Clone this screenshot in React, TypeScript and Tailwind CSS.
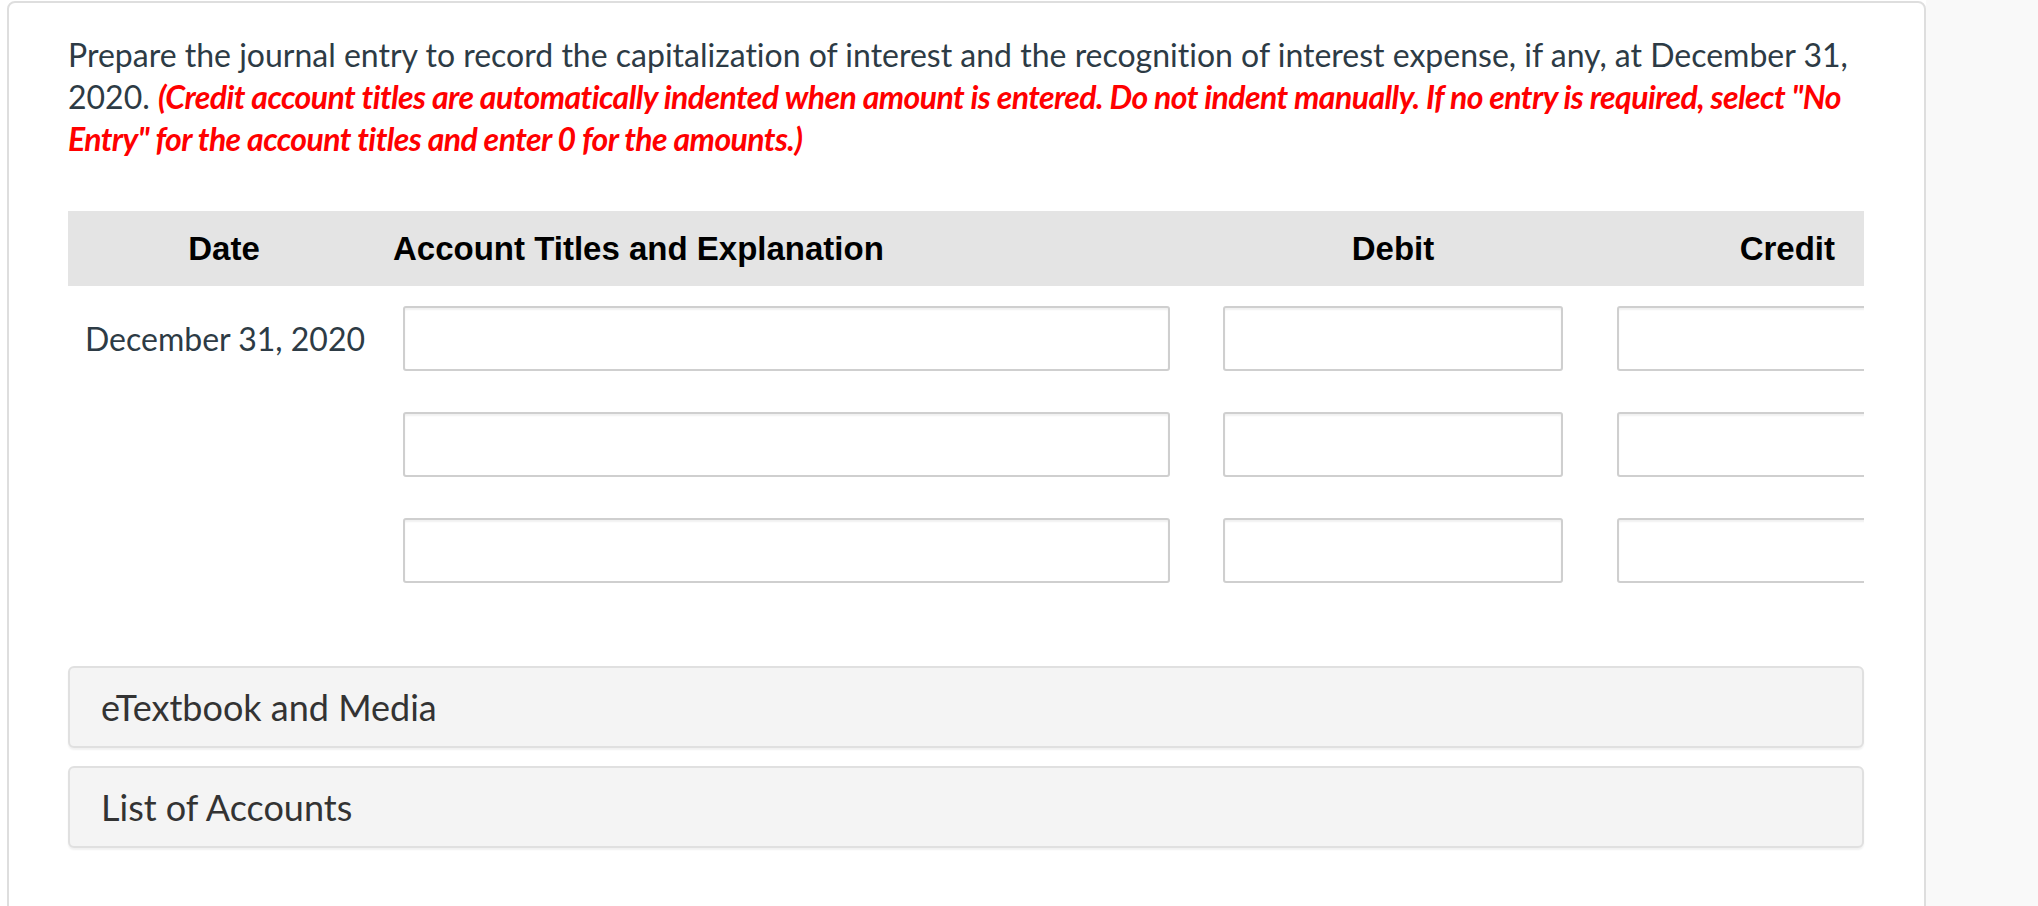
import React from 'react';

const rows = [0, 1, 2];

function EntryInput({ className = '' }: { className?: string }) {
  return (
    <input
      type="text"
      className={`h-[65px] rounded-[3px] border-2 border-[#cfcfcf] bg-white shadow-[inset_0_2px_2px_rgba(0,0,0,0.06)] outline-none ${className}`}
    />
  );
}

function ResourceBox({ label }: { label: string }) {
  return (
    <div className="flex h-[82px] items-center rounded-[6px] border-2 border-[#e0e0e0] bg-[#f4f4f4] pl-[31px] shadow-[0_2px_2px_rgba(0,0,0,0.06)]">
      <span className="text-[36px] text-[#333]">{label}</span>
    </div>
  );
}

export default function App() {
  return (
    <div className="flex h-[906px] overflow-hidden bg-white font-['Lato',sans-serif] [font-variant-ligatures:none]">
      <div className="ml-[7px] mt-[1px] h-[1000px] w-[1919px] shrink-0 rounded-[8px] border-2 border-[#dedede] bg-white pl-[59px] pr-[60px] pt-[31px]">
        <p className="text-[32px] leading-[42px] text-[#2d3b45]">
          Prepare the journal entry to record the capitalization of interest and the recognition of interest expense, if any, at December 31, 2020.{' '}
          <span className="font-bold italic tracking-[-0.018em] text-[#ff0000]">
            (Credit account titles are automatically indented when amount is entered. Do not indent manually. If no entry is required, select "No Entry" for the account titles and enter 0 for the amounts.)
          </span>
        </p>

        <div className="mt-[51px]">
          <div className="grid h-[75px] grid-cols-[312px_816px_394px_274px] items-center bg-[#e4e4e4] font-['Liberation_Sans',sans-serif] text-[33px] font-bold text-black">
            <div className="text-center">Date</div>
            <div className="pl-[13px]">Account Titles and Explanation</div>
            <div className="pl-[27px]">
              <div className="w-[340px] text-center">Debit</div>
            </div>
            <div className="pr-[29px] text-right">Credit</div>
          </div>

          <div className="flex flex-col gap-[41px] pt-[20px]">
            {rows.map((i) => (
              <div key={i} className="grid grid-cols-[312px_816px_394px_274px] items-center">
                <div className="pl-[17px] text-[32px] text-[#2d3b45]">
                  {i === 0 ? 'December 31, 2020' : ''}
                </div>
                <div className="pl-[23px]">
                  <EntryInput className="w-[767px]" />
                </div>
                <div className="pl-[27px]">
                  <EntryInput className="w-[340px]" />
                </div>
                <div className="overflow-hidden pl-[27px]">
                  <EntryInput className="w-[340px]" />
                </div>
              </div>
            ))}
          </div>
        </div>

        <div className="mt-[83px] flex flex-col gap-[18px]">
          <ResourceBox label="eTextbook and Media" />
          <ResourceBox label="List of Accounts" />
        </div>
      </div>
      <div className="flex-1 bg-[#f9f9f9]" />
    </div>
  );
}
